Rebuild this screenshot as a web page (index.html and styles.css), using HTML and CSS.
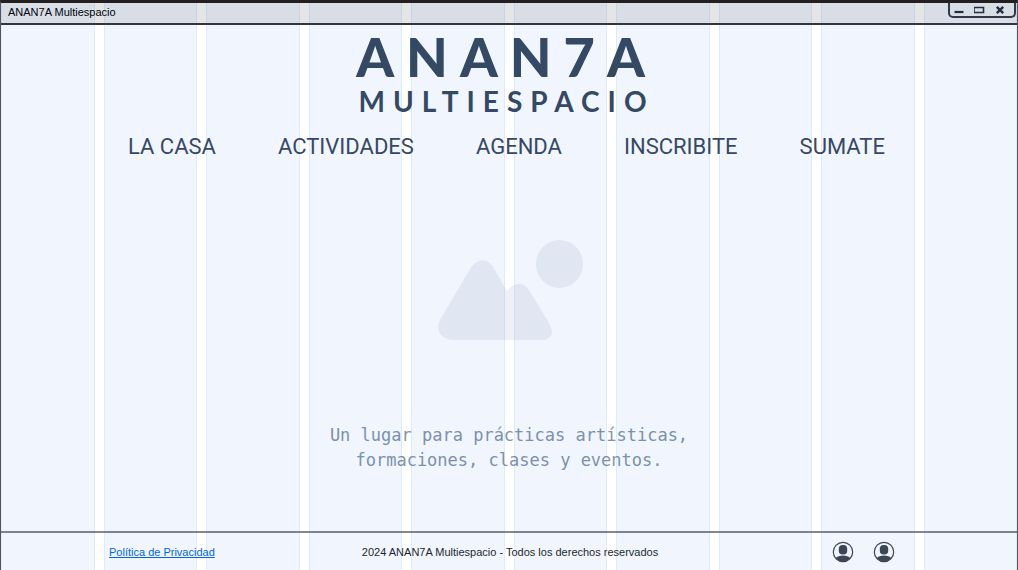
FILE: index.html
```html
<!DOCTYPE html>
<html lang="es">
<head>
<meta charset="utf-8">
<meta name="viewport" content="width=device-width, initial-scale=1">
<title>ANAN7A Multiespacio</title>
<link rel="stylesheet" href="styles.css">
</head>
<body>
<div class="window">
  <header class="titlebar">
    <span class="titlebar-text">ANAN7A Multiespacio</span>
    <div class="controls">
      <button class="control" type="button" aria-label="Minimizar"><svg width="10" height="10" viewBox="0 0 10 10"><path d="M0.500 7h9" stroke="#292b38" stroke-width="2.200"/></svg></button>
      <button class="control" type="button" aria-label="Maximizar"><svg width="12" height="10" viewBox="0 0 12 10"><path d="M0 2.500h9.500v5h-9.500z" fill="none" stroke="#292b38" stroke-width="1.600"/></svg></button>
      <button class="control" type="button" aria-label="Cerrar"><svg width="10" height="10" viewBox="0 0 10 10"><path d="M1.800 1.800l6.400 6.400M8.200 1.800l-6.400 6.400" stroke="#292b38" stroke-width="2.400"/></svg></button>
    </div>
  </header>
  <main class="content">
    <h1 class="brand">
      <span class="brand-name">ANAN7A</span>
      <span class="brand-sub">MULTIESPACIO</span>
    </h1>
    <nav class="nav">
      <a href="#casa">LA CASA</a>
      <a href="#actividades">ACTIVIDADES</a>
      <a href="#agenda">AGENDA</a>
      <a href="#inscribite">INSCRIBITE</a>
      <a href="#sumate">SUMATE</a>
    </nav>
    <div class="hero">
      <svg class="picture" width="146" height="100" viewBox="0 0 146 100" aria-hidden="true">
        <path fill="#eef0f4" d="M31 31C38 17 50 17 57 30L69 51C75 43 84 40 91 50L111 83C117 93 113 100 104 100H18C2 100-4 90 3 78Z"/>
        <ellipse fill="#eef0f4" cx="121.500" cy="24" rx="23.500" ry="24"/>
      </svg>
      <p class="tagline">Un lugar para prácticas artísticas,<br>formaciones, clases y eventos.</p>
    </div>
  </main>
  <footer class="footer">
    <a class="privacy" href="#privacidad">Política de Privacidad</a>
    <span class="rights">2024 ANAN7A Multiespacio - Todos los derechos reservados</span>
    <div class="profiles">
      <a class="profile" href="#perfil-1" aria-label="Perfil 1"><svg width="22" height="22" viewBox="0 0 22 22"><circle cx="11" cy="11" r="9.700" fill="#fff" fill-opacity=".6" stroke="#41454f" stroke-width="1.200"/><rect x="6.800" y="4" width="8.400" height="9.600" rx="3.800" fill="#41454f"/><path d="M3.700 17.300C6 13.500 16 13.500 18.300 17.300A9.700 9.700 0 0 1 3.700 17.300Z" fill="#41454f"/></svg></a>
      <a class="profile" href="#perfil-2" aria-label="Perfil 2"><svg width="22" height="22" viewBox="0 0 22 22"><circle cx="11" cy="11" r="9.700" fill="#fff" fill-opacity=".6" stroke="#41454f" stroke-width="1.200"/><rect x="6.800" y="4" width="8.400" height="9.600" rx="3.800" fill="#41454f"/><path d="M3.700 17.300C6 13.500 16 13.500 18.300 17.300A9.700 9.700 0 0 1 3.700 17.300Z" fill="#41454f"/></svg></a>
    </div>
  </footer>
  <div class="guides" aria-hidden="true"><i></i><i></i><i></i><i></i><i></i><i></i><i></i><i></i><i></i><i></i></div>
</div>
</body>
</html>
```
FILE: styles.css
```css
* {
  box-sizing: border-box;
}

body {
  margin: 0;
  background: #fff;
  color: #1d1f26;
  font: 11px/16px "Liberation Sans", Arial, sans-serif;
}

a {
  color: inherit;
  text-decoration: none;
}

.window {
  position: relative;
  display: flex;
  flex-direction: column;
  min-height: 100vh;
  border: 1px solid #55565c;
  border-top: 3px solid #231f20;
  border-bottom: 0;
}

.titlebar {
  display: flex;
  justify-content: space-between;
  align-items: flex-start;
  height: 22px;
  padding-left: 7px;
  background: #e6e5e5;
  border-bottom: 2px solid #34343c;
}

.titlebar-text {
  padding-top: 1px;
  color: #000;
}

.controls {
  display: flex;
  align-items: center;
  justify-content: space-between;
  width: 68px;
  height: 15px;
  margin-right: 1px;
  padding: 0 9px 0 4px;
  border: 2px solid #343642;
  border-top: 0;
  border-radius: 0 0 5px 5px;
}

.control {
  display: flex;
  padding: 0;
  border: 0;
  background: none;
}

.content {
  flex: 1;
  display: flex;
  flex-direction: column;
  align-items: center;
}

.brand {
  display: flex;
  flex-direction: column;
  align-items: center;
  margin: 5px 5px 0 0;
  color: #38485c;
  font-family: Lato, sans-serif;
  font-weight: 700;
}

.brand-name {
  font-size: 54px;
  font-weight: 900;
  line-height: 54px;
  letter-spacing: 12px;
}

.brand-sub {
  font-size: 28px;
  line-height: 34px;
  letter-spacing: 8px;
}

.nav {
  display: flex;
  justify-content: space-between;
  width: 100%;
  padding: 13px 13% 0 12.5%;
  color: #3b475d;
  font: 22px/32px Roboto, sans-serif;
}

.hero {
  display: flex;
  flex: 1;
  flex-direction: column;
  align-items: center;
  padding-top: 77px;
}

.picture {
  display: block;
  margin-left: 4px;
}

.tagline {
  margin: 83px 0 0;
  color: #8494ab;
  font: 17px/25px "DejaVu Sans Mono", monospace;
  text-align: center;
}

.footer {
  display: grid;
  grid-template-columns: 1fr auto 1fr;
  align-items: center;
  height: 39px;
  padding: 0 12% 0 108px;
  border-top: 2px solid #85878c;
}

.privacy {
  justify-self: start;
  color: #0066e8;
  text-decoration: underline;
}

.rights {
  margin-left: 16px;
}

.profiles {
  display: flex;
  justify-content: flex-end;
  gap: 19px;
}

.profile {
  display: flex;
}

.guides {
  position: absolute;
  inset: 0;
  display: grid;
  grid-template-columns: repeat(10, 1fr);
  gap: 9px;
  pointer-events: none;
}

.guides i {
  background: rgba(0, 95, 240, 0.055);
  border: solid rgba(0, 110, 240, 0.08);
  border-width: 0 1px;
}
```
